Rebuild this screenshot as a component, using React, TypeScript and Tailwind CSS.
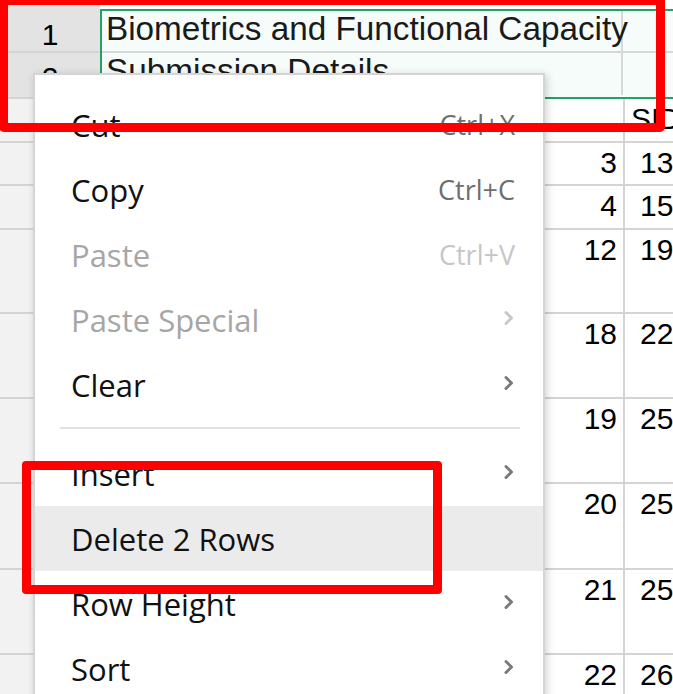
import React from "react";

type Item =
  | { kind: "sep" }
  | {
      kind: "item";
      label: string;
      shortcut?: string;
      sub?: boolean;
      disabled?: boolean;
      active?: boolean;
    };

const menu: Item[] = [
  { kind: "item", label: "Cut", shortcut: "Ctrl+X" },
  { kind: "item", label: "Copy", shortcut: "Ctrl+C" },
  { kind: "item", label: "Paste", shortcut: "Ctrl+V", disabled: true },
  { kind: "item", label: "Paste Special", sub: true, disabled: true },
  { kind: "item", label: "Clear", sub: true },
  { kind: "sep" },
  { kind: "item", label: "Insert", sub: true },
  { kind: "item", label: "Delete 2 Rows", active: true },
  { kind: "item", label: "Row Height", sub: true },
  { kind: "item", label: "Sort", sub: true },
];

// rows below the selection: [height, colA, colB]
const rows: [string, string, string][] = [
  ["h-[44px]", "", "SID"],
  ["h-[43px]", "3", "13"],
  ["h-[44px]", "4", "15"],
  ["h-[84px]", "12", "19"],
  ["h-[85px]", "18", "22"],
  ["h-[85px]", "19", "25"],
  ["h-[86px]", "20", "25"],
  ["h-[85px]", "21", "25"],
  ["h-[85px]", "22", "26"],
];

const Chevron: React.FC<{ disabled?: boolean }> = ({ disabled }) => (
  <svg width="12" height="18" viewBox="0 0 12 18" fill="none">
    <path
      d="M3 3.5 L8.5 9 L3 14.5"
      stroke={disabled ? "#c8c8c8" : "#7a7a7a"}
      strokeWidth="3"
      strokeLinecap="round"
      strokeLinejoin="round"
    />
  </svg>
);

const ContextMenu: React.FC = () => (
  <div className="absolute left-[33px] top-[73px] w-[512px] h-[700px] bg-white border-2 border-[#d4d4d4] shadow-[2px_2px_8px_rgba(0,0,0,0.18)] pt-[17px] font-['Open_Sans',sans-serif]">
    {menu.map((m, i) =>
      m.kind === "sep" ? (
        <div key={i} className="h-[24px] pt-[10px] pl-[25px] pr-[23px]">
          <div className="h-[2px] bg-[#e1e1e1]" />
        </div>
      ) : (
        <div
          key={i}
          className={`h-[65px] flex items-center justify-between pl-[36px] pr-[28px] pt-[2px] ${
            m.active ? "bg-[#ebebeb]" : ""
          }`}
        >
          <span
            className={`text-[31px] ${
              m.disabled ? "text-[#a6a6a6]" : "text-[#111]"
            }`}
          >
            {m.label}
          </span>
          {m.shortcut && (
            <span
              className={`text-[27px] ${
                m.disabled ? "text-[#c6c6c6]" : "text-[#6e6e6e]"
              }`}
            >
              {m.shortcut}
            </span>
          )}
          {m.sub && (
            <span className="-mt-[6px]">
              <Chevron disabled={m.disabled} />
            </span>
          )}
        </div>
      )
    )}
  </div>
);

export default function App() {
  return (
    <div className="relative w-[673px] h-[694px] overflow-hidden bg-white font-['Liberation_Sans',Arial,sans-serif] text-black">
      {/* scrolled-off row above */}
      <div className="flex h-[9px]">
        <div className="w-[100px] bg-[#e3e3e3]" />
        <div className="flex-1 bg-white" />
      </div>

      {/* selected rows 1-2 */}
      <div className="flex">
        <div className="w-[100px] flex flex-col bg-[#e3e3e3]">
          <div className="h-[44px] border-b-2 border-[#d4d4d4] text-center text-[30px] leading-[40px] pt-[6px]">
            1
          </div>
          <div className="h-[46px] border-b-2 border-[#d4d4d4] text-center text-[30px] leading-[40px] pt-[5px]">
            2
          </div>
        </div>
        <div className="flex-1 border-2 border-r-0 border-[#21a366] bg-[#f5fcf9] flex flex-col">
          <div className="h-[42px] flex border-b-2 border-[#d8d8d8]">
            <div className="w-[521px] border-r-2 border-[#d8d8d8] pl-[4px] text-[33.3px] leading-[36px] whitespace-nowrap text-[#1a1a1a]">
              Biometrics and Functional Capacity
            </div>
            <div className="flex-1" />
          </div>
          <div className="h-[42px] flex">
            <div className="w-[521px] border-r-2 border-[#d8d8d8] pl-[4px] text-[33.3px] leading-[36px] whitespace-nowrap text-[#1a1a1a]">
              Submission Details
            </div>
            <div className="flex-1" />
          </div>
        </div>
      </div>

      {/* remaining rows */}
      {rows.map(([h, a, b], i) => (
        <div key={i} className={`flex ${h} border-b-2 border-[#d4d4d4]`}>
          <div className="w-[100px] bg-[#f2f2f2]" />
          <div className="w-[525px] border-r-2 border-[#d4d4d4] text-right pr-[6px] text-[30px] leading-[40px]">
            {a}
          </div>
          <div
            className={`flex-1 overflow-hidden whitespace-nowrap text-[30px] leading-[40px] ${
              a ? "pl-[15px]" : "pl-[6px]"
            }`}
          >
            {b}
          </div>
        </div>
      ))}

      <ContextMenu />

      {/* annotation boxes */}
      <div className="absolute left-[-1px] top-[-4px] w-[666px] h-[136px] border-[9px] border-[#ff0000] rounded-[5px]" />
      <div className="absolute left-[22px] top-[461px] w-[420px] h-[133px] border-[9px] border-[#ff0000] rounded-[4px]" />
    </div>
  );
}
